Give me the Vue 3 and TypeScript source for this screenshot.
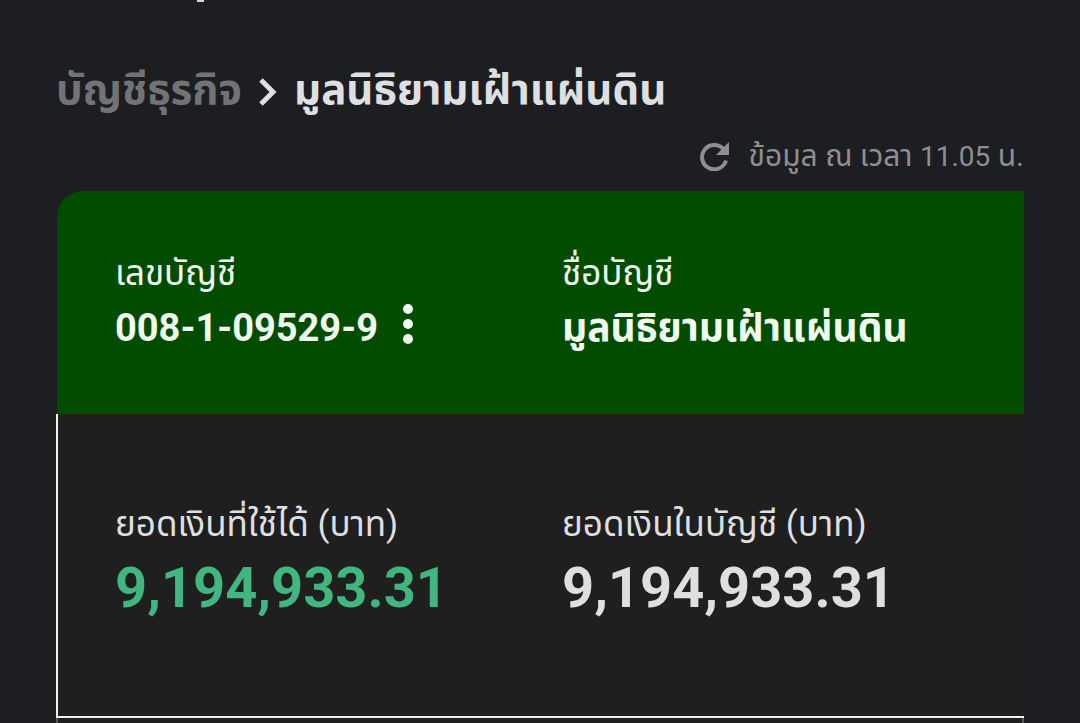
<script setup lang="ts">
interface Field { label: string; value: string; kind: string }
const account: Field[] = [
  { label: 'เลขบัญชี', value: '008-1-09529-9', kind: 'number' },
  { label: 'ชื่อบัญชี', value: 'มูลนิธิยามเฝ้าแผ่นดิน', kind: 'name' },
]
const balances: Field[] = [
  { label: 'ยอดเงินที่ใช้ได้ (บาท)', value: '9,194,933.31', kind: 'available' },
  { label: 'ยอดเงินในบัญชี (บาท)', value: '9,194,933.31', kind: 'total' },
]
</script>

<template>
  <main class="page">
    <span class="descender" aria-hidden="true"></span>
    <nav class="crumbs">
      <a href="#" class="parent">บัญชีธุรกิจ</a>
      <svg class="chevron" viewBox="0 0 18 28" aria-hidden="true"><path d="M2 2l12 12L2 26" /></svg>
      <h1>มูลนิธิยามเฝ้าแผ่นดิน</h1>
    </nav>
    <div class="updated">
      <button class="icon-button" type="button" aria-label="รีเฟรช">
        <svg class="refresh" viewBox="0 0 29 29" aria-hidden="true"><path class="arc" d="M23.2 6.8A12.2 12.2 0 1 0 26 18.5" /><path class="tip" d="M29 0v13H16z" /></svg>
      </button>
      <span>ข้อมูล ณ เวลา <time>11.05</time> น.</span>
    </div>
    <section class="card">
      <dl class="head">
        <div v-for="f in account" :key="f.label">
          <dt>{{ f.label }}</dt>
          <dd :class="f.kind">
            {{ f.value }}
            <button v-if="f.kind === 'number'" class="icon-button" type="button" aria-label="ตัวเลือก">
              <svg class="dots" viewBox="0 0 12 40" aria-hidden="true"><circle cx="6" cy="5" r="5" /><circle cx="6" cy="20" r="5" /><circle cx="6" cy="35" r="5" /></svg>
            </button>
          </dd>
        </div>
      </dl>
      <dl class="body">
        <div v-for="f in balances" :key="f.label">
          <dt>{{ f.label }}</dt>
          <dd :class="f.kind">{{ f.value }}</dd>
        </div>
      </dl>
      <div class="next"></div>
    </section>
  </main>
</template>

<style>
body { margin: 0; background: #1d1e22; }
</style>

<style scoped>
.page { position: relative; padding: 60px 56px 0; overflow: hidden; color: #dedfe0; font-family: Roboto, "Noto Sans", "Noto Sans Thai", sans-serif; }
.descender { position: absolute; top: 0; left: 197px; width: 7px; height: 2px; background: #d8d8d8; }
.crumbs { display: flex; align-items: center; height: 60px; font-size: 42px; font-weight: 700; line-height: 60px; white-space: nowrap; }
.parent { color: #727375; text-decoration: none; }
.chevron { width: 18px; height: 28px; margin: 3px 17px 0; fill: none; stroke: #dedfe0; stroke-width: 5; }
h1 { margin: 0; font-size: inherit; line-height: inherit; }
.updated { display: flex; align-items: center; justify-content: flex-end; gap: 20px; height: 40px; margin: 16px 0 15px; color: #8e8f91; font-size: 30px; line-height: 40px; white-space: nowrap; }
.updated time { font-size: 28px; }
.icon-button { display: inline-flex; padding: 0; border: 0; background: none; color: inherit; cursor: pointer; }
.refresh { width: 29px; height: 29px; }
.refresh .arc { fill: none; stroke: currentColor; stroke-width: 4; }
.refresh .tip { fill: currentColor; }
.head, .body { display: grid; grid-template-columns: 447px 1fr; margin: 0; white-space: nowrap; }
.head { margin-left: 1px; padding: 57px 0 58px 58px; border-radius: 26px 0 0; background: #024c00; color: #f1faee; }
.body { padding: 85px 0 91px 57px; border: solid #f0f0f0; border-width: 0 0 2px 2px; background: #1f1f1f; }
.next { height: 5px; border: solid #58585a; border-width: 0 2px; background: #1f1f1f; }
dt { font-size: 35px; line-height: 52px; }
dd { display: flex; align-items: center; gap: 24px; margin: 0; font-weight: 700; line-height: 56px; }
.number { font-size: 38px; }
.name { font-size: 39px; }
.dots { width: 12px; height: 40px; margin-bottom: 8px; fill: currentColor; }
.body dd { font-size: 56px; line-height: 74px; }
.body .available { color: #42b680; }
</style>
